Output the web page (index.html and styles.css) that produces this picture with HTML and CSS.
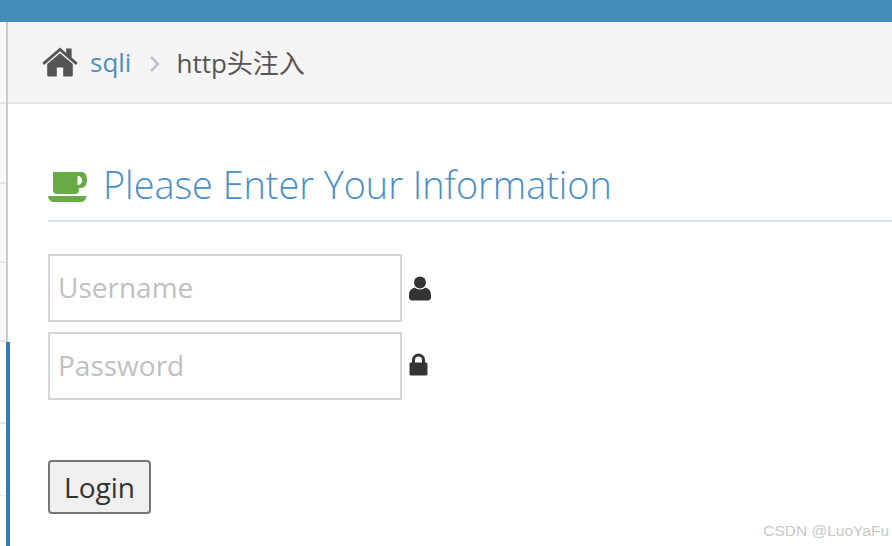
FILE: index.html
```html
<!DOCTYPE html>
<html lang="en">
<head>
  <meta charset="UTF-8">
  <meta name="viewport" content="width=device-width, initial-scale=1.0">
  <title>http头注入</title>
  <link rel="stylesheet" href="styles.css">
</head>
<body>
  <!-- Top bar -->
  <div class="navbar"></div>

  <div class="layout">
    <!-- Sidebar edge -->
    <div class="sidebar">
      <div class="side-item first"></div>
      <div class="side-item"></div>
      <div class="side-item mid"></div>
      <div class="side-item mid"></div>
      <div class="side-item active"></div>
      <div class="side-item active short"></div>
      <div class="side-item active last"></div>
    </div>

    <div class="main">
      <!-- Breadcrumb -->
      <div class="breadcrumb">
        <svg class="home-icon" viewBox="0 0 36 30" width="36" height="30">
          <path fill="#555" d="M18 6.200 5.200 17v11a1.400 1.400 0 0 0 1.400 1.400h8.200v-9h6.400v9h8.200a1.400 1.400 0 0 0 1.400-1.400V17z"/>
          <path fill="#555" d="M18 0.600 0.400 15.800l1.800 2.100L18 4.300l15.800 13.600 1.800-2.100-6-5.200V1.400h-5.400v4.500z"/>
        </svg>
        <a class="crumb-link" href="#">sqli</a>
        <svg class="crumb-sep" viewBox="0 0 12 18" width="12" height="18">
          <path d="M2 2l7 7-7 7" fill="none" stroke="#b9bfc6" stroke-width="2.400"/>
        </svg>
        <span class="crumb-current">http头注入</span>
      </div>

      <div class="content">
        <h1 class="page-title">
          <svg class="cup-icon" viewBox="0 0 39 30" width="39" height="30">
            <path fill="#69aa46" fill-rule="evenodd" d="M5 0h29c3 0 5 3 5 8s-2.500 8-6 8h-2v2c0 2.500-1.500 4-4 4H9c-2.500 0-4-1.500-4-4zM29.500 4v9c3 0 4.500-2 4.500-4.500S32.500 4 29.500 4z"/>
            <path fill="#69aa46" d="M0 24h38.500c-.5 3.500-2.500 6-5.500 6H5.500C2.500 30 .500 27.500 0 24z"/>
          </svg>
          Please Enter Your Information
        </h1>

        <form class="login-form">
          <label class="field">
            <input type="text" placeholder="Username">
            <svg viewBox="0 0 22 25" width="22" height="25">
              <circle cx="11" cy="6.500" r="6" fill="#333"/>
              <path fill="#333" d="M5.500 11.500c1.500 1.300 3.500 2 5.500 2s4-.7 5.500-2c3 .8 5.500 3.500 5.500 7.500v2.500c0 1.600-1.400 3-3 3H3c-1.600 0-3-1.400-3-3V19c0-4 2.500-6.700 5.500-7.500z"/>
            </svg>
          </label>
          <label class="field">
            <input type="password" placeholder="Password">
            <svg class="lock-icon" viewBox="0 0 19 23" width="19" height="23">
              <path fill="none" stroke="#333" stroke-width="3" d="M4.500 11V7a5 5 0 0 1 10 0v4"/>
              <rect x="0.500" y="9.500" width="18" height="13" rx="1.500" fill="#333"/>
            </svg>
          </label>
          <button class="login-btn" type="button">Login</button>
        </form>
      </div>
    </div>
  </div>

  <div class="watermark">CSDN @LuoYaFu</div>
</body>
</html>
```

FILE: styles.css
```css
/* Basic styling */
html, body {
  height: 100%;
}
body {
  margin: 0;
  overflow: hidden;
  background-color: #fff;
  color: #393939;
  font-family: "Open Sans", "Noto Sans CJK SC", sans-serif;
  display: flex;
  flex-direction: column;
}
.navbar {
  height: 22px;
  background-color: #438eb9;
  flex: none;
}
.layout {
  flex: 1;
  display: flex;
  min-height: 0;
}

/* Sidebar edge */
.sidebar {
  width: 8px;
  flex: none;
  display: flex;
  flex-direction: column;
}
.side-item {
  height: 80px;
  flex: none;
  box-sizing: border-box;
  width: 8px;
  background-color: #f8f8f8;
  border-right: 2px solid #cccccc;
  box-shadow: inset 0 -2px 0 #e5e5e5;
}
.side-item.first {
  height: 82px;
}
.side-item.mid {
  height: 79px;
}
.side-item.active {
  height: 82px;
  width: 10px;
  background-color: #fff;
  border-right: 4px solid #2b7dbc;
}
.side-item.short {
  height: 72px;
  box-shadow: none;
  background: linear-gradient(90deg, #e0e0e0 50%, #fff 50%) bottom left / 4px 1px repeat-x;
}
.side-item.last {
  height: 60px;
  box-shadow: none;
}

/* Breadcrumb */
.main {
  flex: 1;
  min-width: 0;
}
.breadcrumb {
  height: 82px;
  box-sizing: border-box;
  background-color: #f5f5f5;
  border-bottom: 2px solid #e5e5e5;
  padding: 0 0 0 34px;
  display: flex;
  align-items: center;
  font-size: 26px;
}
.home-icon {
  margin-right: 12px;
}
.crumb-link {
  color: #4c8fbd;
  text-decoration: none;
}
.crumb-sep {
  margin: 3px 15px 0 18px;
}
.crumb-current {
  color: #555;
}

/* Form area */
.content {
  padding: 0 0 0 40px;
}
.page-title {
  margin: 58px 0 0;
  height: 60px;
  box-sizing: border-box;
  border-bottom: 2px solid #d5e3ef;
  color: #478fca;
  font-size: 37.800px;
  font-weight: 300;
  line-height: 45px;
  display: flex;
  align-items: flex-start;
}
.cup-icon {
  margin: 10px 16px 0 0;
}
.login-form {
  display: flex;
  flex-direction: column;
  align-items: flex-start;
  margin-top: 32px;
}
.field {
  display: flex;
  align-items: center;
  gap: 7px;
  margin-bottom: 10px;
}
.field input {
  width: 354px;
  height: 68px;
  box-sizing: border-box;
  border: 2px solid #d5d5d5;
  padding: 0 8px 2px;
  font-family: inherit;
  font-size: 28px;
  outline: none;
}
.field input::placeholder {
  color: #c0c0c0;
}
.lock-icon {
  margin-bottom: 3px;
}
.login-btn {
  margin-top: 50px;
  width: 103px;
  height: 54px;
  box-sizing: border-box;
  background-color: #efefef;
  border: 2px solid #767676;
  border-radius: 4px;
  color: #333;
  font-family: inherit;
  font-size: 28px;
  padding: 0;
}

/* Watermark over the page corner */
.watermark {
  position: absolute;
  right: 3px;
  bottom: 6px;
  color: #c8c8c8;
  font-family: "Liberation Sans", sans-serif;
  font-size: 15.500px;
}
```
